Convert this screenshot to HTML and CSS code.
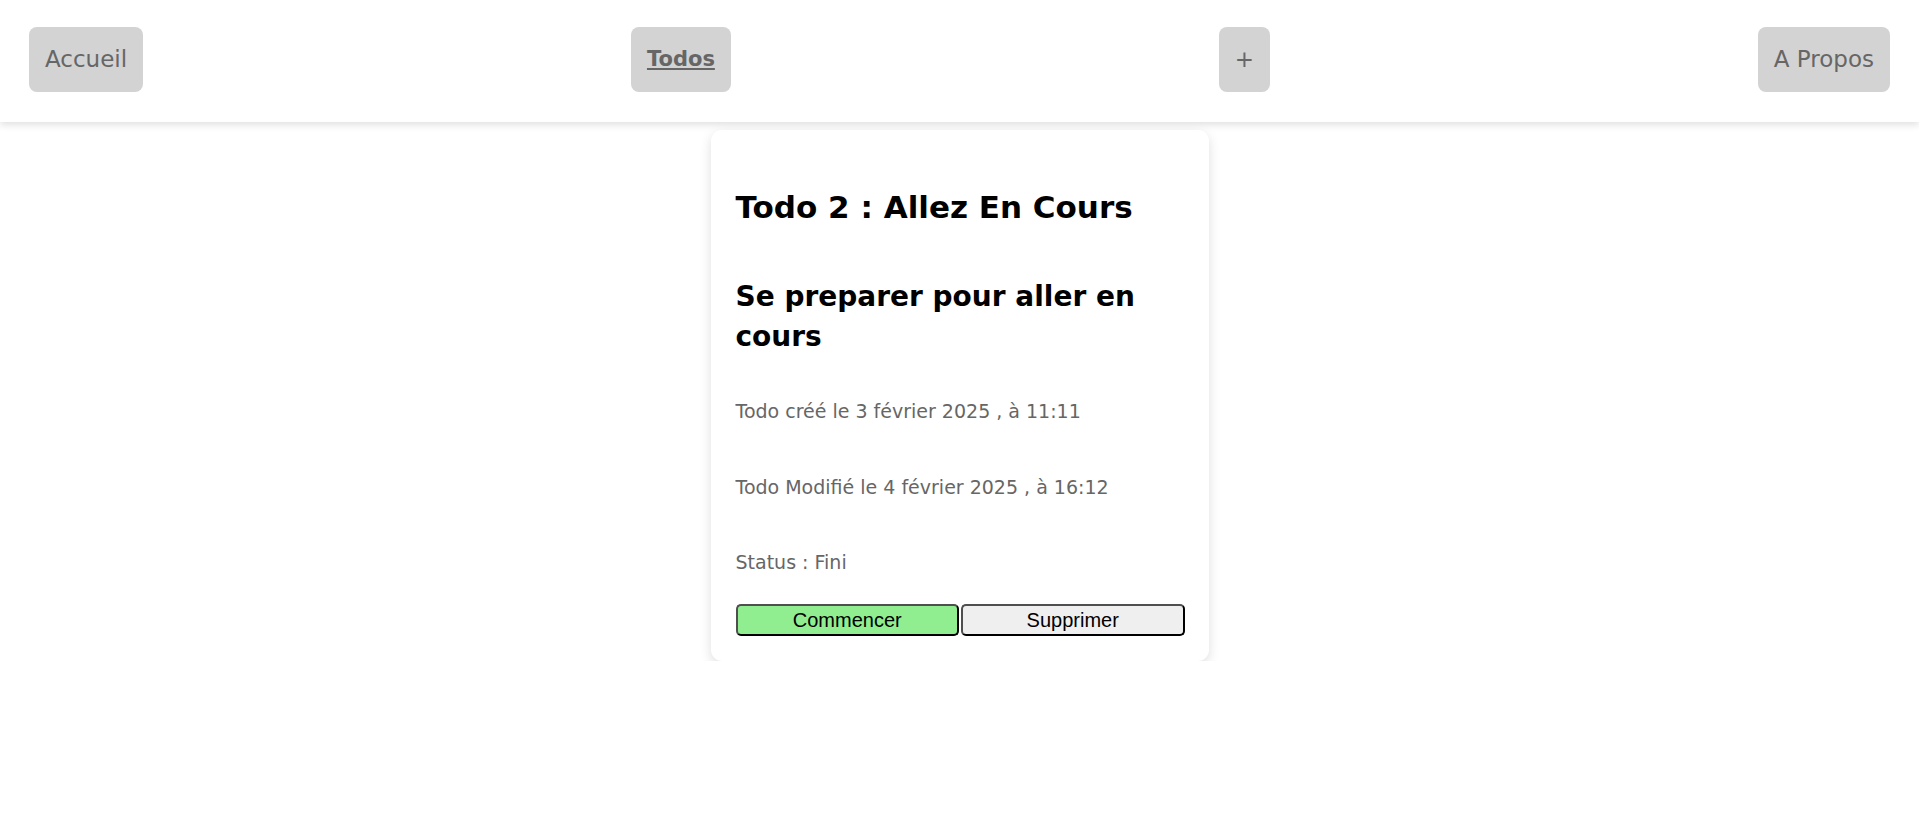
FILE: index.html
```html
<!DOCTYPE html>
<html lang="fr">
<head>
<meta charset="utf-8">
<title>Todo 2</title>
<link rel="stylesheet" href="styles.css">
</head>
<body>
<nav class="nav">
  <a class="nav-btn" href="#">Accueil</a>
  <a class="nav-btn nav-btn--active" href="#">Todos</a>
  <a class="nav-btn" href="#">+</a>
  <a class="nav-btn" href="#">A Propos</a>
</nav>
<main class="main">
  <article class="card">
    <h1 class="card-title">Todo 2 : Allez En Cours</h1>
    <h2 class="card-subtitle">Se preparer pour aller en cours</h2>
    <p class="card-text card-text--first">Todo créé le 3 février 2025 , à 11:11</p>
    <p class="card-text">Todo Modifié le 4 février 2025 , à 16:12</p>
    <p class="card-text card-text--last">Status : Fini</p>
    <div class="card-actions">
      <button class="btn btn--start">Commencer</button>
      <button class="btn btn--delete">Supprimer</button>
    </div>
  </article>
</main>
</body>
</html>
```
FILE: styles.css
```css
* { box-sizing: border-box; }
body {
  margin: 0;
  font-family: "DejaVu Sans", "Noto Sans", sans-serif;
  background: #fff;
  color: #000;
}
.nav {
  height: 122px;
  padding: 0 29px 3px;
  display: flex;
  justify-content: space-between;
  align-items: center;
  background: #fff;
  box-shadow: 0 3px 7px rgba(0,0,0,0.12);
}
.nav-btn {
  display: block;
  height: 65px;
  line-height: 65px;
  padding: 0 16px;
  background: #d3d3d3;
  border-radius: 8px;
  color: #666;
  font-size: 23px;
  text-decoration: none;
}
.nav-btn--active {
  font-size: 21px;
  font-weight: 700;
  text-decoration: underline;
}
.main {
  display: flex;
  justify-content: center;
  padding-top: 8px;
}
.card {
  width: 498px;
  padding: 26px 24px 25px 25px;
  background: #fff;
  border-radius: 11px;
  box-shadow: 0 4px 12px rgba(0,0,0,0.13);
}
.card-title {
  margin: 31px 0 0;
  font-size: 31px;
  line-height: 40px;
  font-weight: 700;
}
.card-subtitle {
  margin: 50px 0 0;
  font-size: 28px;
  line-height: 40px;
  font-weight: 700;
}
.card-text {
  margin: 46px 0 0;
  font-size: 19px;
  line-height: 30px;
  color: #666;
}
.card-text--first { margin-top: 39px; }
.card-text--last { margin-top: 45px; }
.card-actions {
  display: flex;
  gap: 2px;
  margin-top: 27px;
}
.btn {
  flex: 1;
  height: 32px;
  border: 2px solid #000;
  border-top-color: #4f4f4f;
  border-left-color: #4f4f4f;
  border-radius: 5px;
  font-family: "Liberation Sans", Arial, sans-serif;
  font-size: 20px;
  color: #000;
  padding: 0;
}
.btn--start { background: #90ee90; }
.btn--delete { background: #efefef; }
```
